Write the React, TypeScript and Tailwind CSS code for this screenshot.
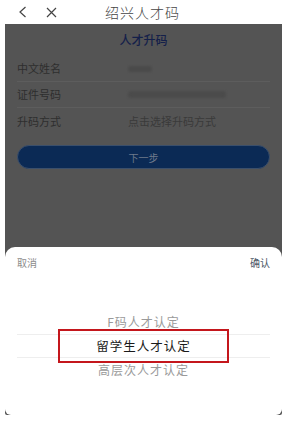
import React from "react";

const rows = [
  { label: "中文姓名", value: "blur-short" },
  { label: "证件号码", value: "blur-long" },
  { label: "升码方式", value: "点击选择升码方式" },
];

export default function App() {
  return (
    <div
      className="w-[287px] h-[426px] bg-white flex flex-col overflow-hidden"
      style={{ fontFamily: '"Noto Sans CJK SC", "Noto Sans", sans-serif' }}
    >
      {/* Nav bar */}
      <div className="h-[24px] flex items-center relative text-[#333]">
        <svg className="ml-[18px]" width="9" height="12" viewBox="0 0 9 12" fill="none" stroke="#444" strokeWidth="1.2">
          <path d="M7.5 1 L2 6 L7.5 11" />
        </svg>
        <svg className="ml-[19px]" width="11" height="11" viewBox="0 0 11 11" fill="none" stroke="#444" strokeWidth="1.2">
          <path d="M1 1 L10 10 M10 1 L1 10" />
        </svg>
        <span className="absolute left-[105px] top-[2px] text-[14px] leading-[20px] tracking-[1px] font-light text-[#444]">
          绍兴人才码
        </span>
      </div>

      {/* Dimmed page + sheet */}
      <div className="mx-[5px] w-[277px] h-[391px] bg-[#545454] flex flex-col rounded-b-[2px]">
        <div className="h-[223px] flex flex-col">
          <div className="h-[32px] flex items-center justify-center text-[12px] font-medium text-[#14204a]">
            人才升码
          </div>
          <div className="flex flex-col">
            {rows.map((r, i) => (
              <div
                key={r.label}
                className={`h-[26px] flex items-center mx-[12px] ${i < 2 ? "border-b border-[#5d5d5d]" : ""}`}
              >
                <span className="w-[111px] text-[11px] text-[#2e2e2e]">{r.label}</span>
                {r.value === "blur-short" ? (
                  <span className="w-[24px] h-[6px] rounded-sm bg-[#4a4a4a] blur-[1px]" />
                ) : r.value === "blur-long" ? (
                  <span className="w-[98px] h-[7px] rounded-sm bg-[#4b4b4b] blur-[1px]" />
                ) : (
                  <span className="text-[11px] text-[#3a3a3a]">{r.value}</span>
                )}
              </div>
            ))}
          </div>
          <div className="mt-[11px] mx-[12px] h-[24px] rounded-full bg-[#0b2a55] border border-[#3b4f6b] flex items-center justify-center text-[10px] text-[#6f7a8c]">
            下一步
          </div>
        </div>

        {/* Bottom sheet */}
        <div className="h-[168px] bg-white rounded-t-[10px] rounded-b-[6px] flex flex-col">
          <div className="h-[30px] flex items-center justify-between px-[12px] text-[10px]">
            <span className="text-[#8c8c8c]">取消</span>
            <span className="text-[#4c5866]">确认</span>
          </div>
          <div className="mt-[33px] flex flex-col items-center relative mx-[12px]">
            <div className="h-[24px] w-full flex items-center justify-center text-[12px] text-[#9a9a9a] tracking-[1px]">
              F码人才认定
            </div>
            <div className="h-[24px] w-full flex items-center justify-center text-[12.5px] text-[#1a1a1a] tracking-[1px] border-y border-[#eeeeee]">
              留学生人才认定
            </div>
            <div className="h-[24px] w-full flex items-center justify-center text-[12px] text-[#9a9a9a] tracking-[1px]">
              高层次人才认定
            </div>
            <div className="absolute left-[41px] top-[19px] w-[171px] h-[34px] border-2 border-[#c4161c]" />
          </div>
        </div>
      </div>
    </div>
  );
}
